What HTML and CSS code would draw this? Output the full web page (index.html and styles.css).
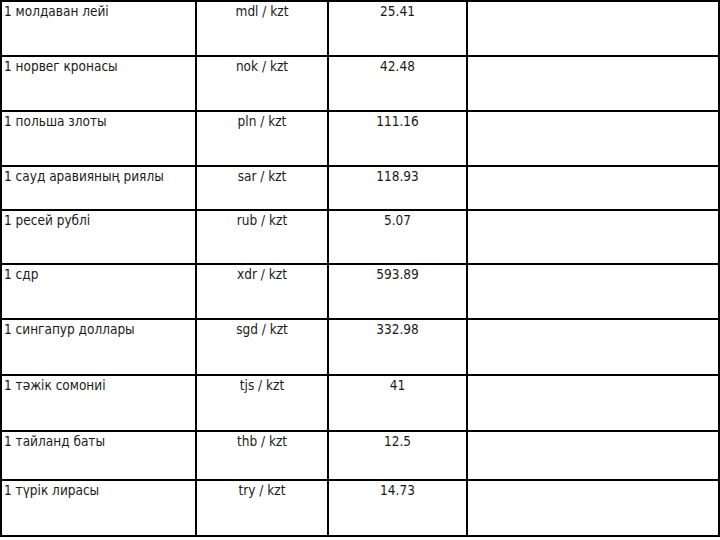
FILE: index.html
```html
<!DOCTYPE html>
<html lang="kk">
<head>
<meta charset="utf-8">
<title>Валюта бағамдары</title>
<link rel="stylesheet" href="styles.css">
</head>
<body>
<div class="rates">
  <div class="cell name">1 молдаван лейі</div><div class="cell code">mdl / kzt</div><div class="cell val">25.41</div><div class="cell empty"></div>
  <div class="cell name">1 норвег кронасы</div><div class="cell code">nok / kzt</div><div class="cell val">42.48</div><div class="cell empty"></div>
  <div class="cell name">1 польша злоты</div><div class="cell code">pln / kzt</div><div class="cell val">111.16</div><div class="cell empty"></div>
  <div class="cell name">1 сауд аравияның риялы</div><div class="cell code">sar / kzt</div><div class="cell val">118.93</div><div class="cell empty"></div>
  <div class="cell name">1 ресей рублі</div><div class="cell code">rub / kzt</div><div class="cell val">5.07</div><div class="cell empty"></div>
  <div class="cell name">1 сдр</div><div class="cell code">xdr / kzt</div><div class="cell val">593.89</div><div class="cell empty"></div>
  <div class="cell name">1 сингапур доллары</div><div class="cell code">sgd / kzt</div><div class="cell val">332.98</div><div class="cell empty"></div>
  <div class="cell name">1 тәжік сомониі</div><div class="cell code">tjs / kzt</div><div class="cell val">41</div><div class="cell empty"></div>
  <div class="cell name">1 тайланд баты</div><div class="cell code">thb / kzt</div><div class="cell val">12.5</div><div class="cell empty"></div>
  <div class="cell name">1 түрік лирасы</div><div class="cell code">try / kzt</div><div class="cell val">14.73</div><div class="cell empty"></div>
</div>
</body>
</html>
```
FILE: styles.css
```css
html, body {
  margin: 0;
  padding: 0;
  background: #ffffff;
}
body {
  font-family: "DejaVu Sans Condensed", "DejaVu Sans", sans-serif;
  font-size: 13.5px;
  color: #1a1a1a;
}
.rates {
  display: grid;
  grid-template-columns: 195px 132px 139px 252px;
  grid-template-rows: 55px 55px 55px 44px 54px 55px 56px 56px 49px 56px;
  border-top: 2px solid #000;
  border-left: 2px solid #000;
  width: 718px;
}
.cell {
  border-right: 2px solid #000;
  border-bottom: 2px solid #000;
  padding-top: 1px;
  line-height: 16px;
  white-space: nowrap;
  overflow: hidden;
}
.name {
  padding-left: 2px;
}
.code, .val {
  text-align: center;
}
```
